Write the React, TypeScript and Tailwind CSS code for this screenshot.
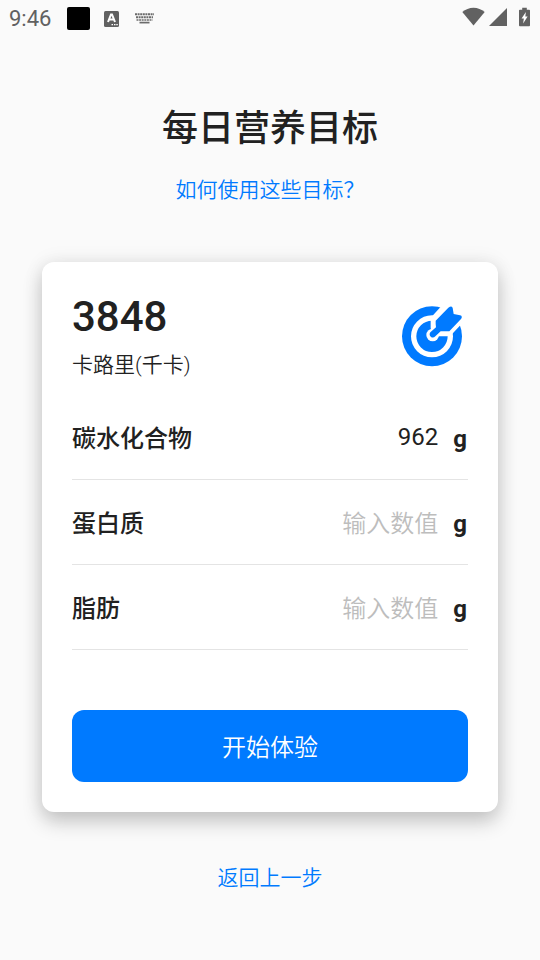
import React, { useState } from 'react';

const nutrients = [
  { id: 'carbs', label: '碳水化合物', initial: '962' },
  { id: 'protein', label: '蛋白质', initial: '' },
  { id: 'fat', label: '脂肪', initial: '' },
];

function StatusBar() {
  return (
    <header className="flex h-9 items-center justify-between px-[9px] pt-px text-[#616161]">
      <div className="flex items-center">
        <span className="w-[42px] text-[22px] leading-6">9:46</span>
        <span className="ml-4 h-[23px] w-[23px] rounded-xs bg-black" />
        <svg className="ml-[14px]" width="15" height="16" viewBox="0 0 15 16">
          <rect width="15" height="16" rx="1.500" fill="#616161" />
          <path d="M4 11 7 3.400h1L11 11M5.200 8.500h4.600" fill="none" stroke="#fff" strokeWidth="2" />
          <path d="M7.500 13.700h1.500M10 13.700h1.500M12.300 13.700h1.500" stroke="#fff" strokeWidth="1.300" />
        </svg>
        <svg className="ml-4" width="19" height="11" viewBox="0 0 19 11" stroke="#6b6b6b" fill="none">
          <path d="M0 1.200h19" strokeWidth="2" strokeDasharray="2 .6" />
          <path d="M1 4.200h17" strokeWidth="2" strokeDasharray="2 .6" />
          <path d="M1.500 7h16" strokeWidth="1.600" strokeDasharray="2 .6" />
          <path d="M4.500 9.600h10" strokeWidth="1.700" />
        </svg>
      </div>
      <div className="flex items-center pr-px pb-1">
        <svg width="23" height="19" viewBox="0 0 23 19" fill="#616161">
          <path d="M11.500 18.500.3 5C3.400 2.300 7.400.7 11.500.7S19.600 2.300 22.700 5z" />
        </svg>
        <svg className="ml-1" width="18" height="18" viewBox="0 0 18 18" fill="#616161">
          <path d="M18 0v18H0z" />
        </svg>
        <svg className="ml-3" width="11" height="20" viewBox="0 0 12 20">
          <path d="M3.500 0h5v2H11q1 0 1 1v16q0 1-1 1H1q-1 0-1-1V3q0-1 1-1h2.500z" fill="#616161" />
          <path d="M7.500 4.500 2.800 11.500h2.500L4.500 17 9.400 9.500H6.900z" fill="#fff" />
        </svg>
      </div>
    </header>
  );
}

function TargetIcon() {
  return (
    <svg width="60" height="61" viewBox="0 0 180 183" aria-hidden="true">
      <circle cx="90" cy="91" r="90" fill="#007aff" />
      <circle cx="90" cy="91" r="55" fill="none" stroke="#fff" strokeWidth="16" />
      {/* white gap around the dart */}
      <path d="M91 84 86 66V35L124 -6H190V42L144 91H113L102 92z" fill="#fff" />
      <circle cx="92" cy="87" r="19" fill="#fff" />
      <path
        d="M101 54V44L139 5Q150 -3 152 6L155 24 174 28Q183 30 177 39L142 76H116L100 91Q94 97 87 93 80 87 85 79L102 64z"
        fill="#007aff"
      />
    </svg>
  );
}

export default function App() {
  const [values, setValues] = useState<Record<string, string>>(
    Object.fromEntries(nutrients.map((n) => [n.id, n.initial]))
  );

  return (
    <div className="min-h-screen bg-[#fafafa] font-[Roboto,'Noto_Sans_CJK_SC',sans-serif] text-[#212121]" lang="zh-CN">
      <StatusBar />

      <main className="flex flex-col items-center px-[42px] pt-[66px] pb-16">
        <h1 className="text-4xl leading-[54px] font-medium">每日营养目标</h1>
        <a href="#help" className="mt-[18px] text-[21px] leading-8 font-[350] text-[#007aff]">如何使用这些目标？</a>

        <form
          className="mt-14 w-full rounded-xl bg-white p-[30px] shadow-[0_10px_20px_rgba(0,0,0,0.2),0_0_20px_rgba(0,0,0,0.08)]"
          onSubmit={(e) => e.preventDefault()}
        >
          <div className="flex items-center justify-between pr-[6px]">
            <div>
              <p className="text-[42px] leading-[50px] font-medium">3848</p>
              <p className="mt-[7px] text-[21px] leading-8 font-[350]">卡路里(千卡)</p>
            </div>
            <TargetIcon />
          </div>

          <div className="mt-[14px]">
            {nutrients.map((n) => (
              <div key={n.id} className="flex h-[85px] items-center border-b border-[#e4e4e4] pr-px text-2xl">
                <label htmlFor={n.id} className="pt-1 font-medium">{n.label}</label>
                <input
                  id={n.id}
                  inputMode="numeric"
                  placeholder="输入数值"
                  value={values[n.id]}
                  onChange={(e) => setValues({ ...values, [n.id]: e.target.value })}
                  className="min-w-0 flex-1 bg-transparent text-right outline-none placeholder:font-[350] placeholder:text-[#bdbdbd] placeholder-shown:pt-1"
                />
                <span className="ml-[15px] pt-1 font-bold">g</span>
              </div>
            ))}
          </div>

          <button type="submit" className="mt-[60px] h-[72px] w-full rounded-xl bg-[#007aff] pt-1 text-2xl font-[350] text-white">
            开始体验
          </button>
        </form>

        <button type="button" className="mt-[50px] text-[21px] leading-8 font-[350] text-[#007aff]">返回上一步</button>
      </main>
    </div>
  );
}
